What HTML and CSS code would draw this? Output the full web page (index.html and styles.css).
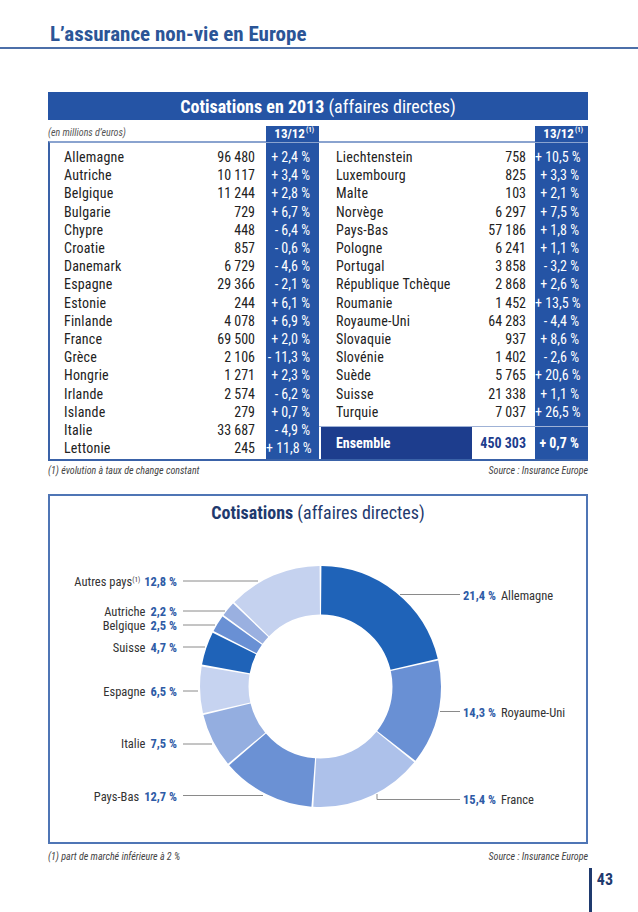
FILE: index.html
```html
<!DOCTYPE html>
<html lang="fr">
<head>
<meta charset="utf-8">
<title>L’assurance non-vie en Europe</title>
<link rel="stylesheet" href="styles.css">
</head>
<body>
<header class="page-head">
  <h1 class="page-title">L’assurance non-vie en Europe</h1>
</header>
<main class="content">
  <section class="cotis">
    <div class="cotis-title"><strong>Cotisations en 2013</strong> (affaires directes)</div>
    <div class="cotis-sub">
      <span class="unit">(en millions d’euros)</span>
      <span class="sub-badge">13/12<sup>(1)</sup></span>
      <span></span>
      <span class="sub-badge">13/12<sup>(1)</sup></span>
    </div>
    <div class="cotis-body">
      <div class="rows rows-left">
        <span>Allemagne</span><span>96 480</span>
        <span>Autriche</span><span>10 117</span>
        <span>Belgique</span><span>11 244</span>
        <span>Bulgarie</span><span>729</span>
        <span>Chypre</span><span>448</span>
        <span>Croatie</span><span>857</span>
        <span>Danemark</span><span>6 729</span>
        <span>Espagne</span><span>29 366</span>
        <span>Estonie</span><span>244</span>
        <span>Finlande</span><span>4 078</span>
        <span>France</span><span>69 500</span>
        <span>Grèce</span><span>2 106</span>
        <span>Hongrie</span><span>1 271</span>
        <span>Irlande</span><span>2 574</span>
        <span>Islande</span><span>279</span>
        <span>Italie</span><span>33 687</span>
        <span>Lettonie</span><span>245</span>
      </div>
      <ul class="pcts pcts-left">
        <li>+ 2,4 %</li><li>+ 3,4 %</li><li>+ 2,8 %</li><li>+ 6,7 %</li>
        <li>- 6,4 %</li><li>- 0,6 %</li><li>- 4,6 %</li><li>- 2,1 %</li>
        <li>+ 6,1 %</li><li>+ 6,9 %</li><li>+ 2,0 %</li><li>- 11,3 %</li>
        <li>+ 2,3 %</li><li>- 6,2 %</li><li>+ 0,7 %</li><li>- 4,9 %</li>
        <li>+ 11,8 %</li>
      </ul>
      <div class="rows rows-right">
        <span>Liechtenstein</span><span>758</span>
        <span>Luxembourg</span><span>825</span>
        <span>Malte</span><span>103</span>
        <span>Norvège</span><span>6 297</span>
        <span>Pays-Bas</span><span>57 186</span>
        <span>Pologne</span><span>6 241</span>
        <span>Portugal</span><span>3 858</span>
        <span>République Tchèque</span><span>2 868</span>
        <span>Roumanie</span><span>1 452</span>
        <span>Royaume-Uni</span><span>64 283</span>
        <span>Slovaquie</span><span>937</span>
        <span>Slovénie</span><span>1 402</span>
        <span>Suède</span><span>5 765</span>
        <span>Suisse</span><span>21 338</span>
        <span>Turquie</span><span>7 037</span>
      </div>
      <ul class="pcts pcts-right">
        <li>+ 10,5 %</li><li>+ 3,3 %</li><li>+ 2,1 %</li><li>+ 7,5 %</li>
        <li>+ 1,8 %</li><li>+ 1,1 %</li><li>- 3,2 %</li><li>+ 2,6 %</li>
        <li>+ 13,5 %</li><li>- 4,4 %</li><li>+ 8,6 %</li><li>- 2,6 %</li>
        <li>+ 20,6 %</li><li>+ 1,1 %</li><li>+ 26,5 %</li>
      </ul>
      <div class="total">
        <span class="total-label">Ensemble</span>
        <span class="total-value">450 303</span>
      </div>
      <div class="total-pct">+ 0,7 %</div>
    </div>
    <div class="notes">
      <span>(1) évolution à taux de change constant</span>
      <span>Source : Insurance Europe</span>
    </div>
  </section>

  <section class="chart">
    <div class="chart-title"><strong>Cotisations</strong> (affaires directes)</div>
    <svg class="donut" width="536" height="312" viewBox="50 530 536 312" xmlns="http://www.w3.org/2000/svg">
      <g class="ring" transform="rotate(-90 320.5 686.5)">
        <circle cx="320.5" cy="686.5" r="96.25" pathLength="100" stroke="#1f63b8" stroke-dasharray="21.15 100" stroke-dashoffset="-0.125"/>
        <circle cx="320.5" cy="686.5" r="96.25" pathLength="100" stroke="#6990d4" stroke-dasharray="14.05 100" stroke-dashoffset="-21.525"/>
        <circle cx="320.5" cy="686.5" r="96.25" pathLength="100" stroke="#adc1ea" stroke-dasharray="15.15 100" stroke-dashoffset="-35.825"/>
        <circle cx="320.5" cy="686.5" r="96.25" pathLength="100" stroke="#6b91d4" stroke-dasharray="12.45 100" stroke-dashoffset="-51.225"/>
        <circle cx="320.5" cy="686.5" r="96.25" pathLength="100" stroke="#94aee0" stroke-dasharray="7.25 100" stroke-dashoffset="-63.925"/>
        <circle cx="320.5" cy="686.5" r="96.25" pathLength="100" stroke="#c6d3f0" stroke-dasharray="6.25 100" stroke-dashoffset="-71.425"/>
        <circle cx="320.5" cy="686.5" r="96.25" pathLength="100" stroke="#1f63b8" stroke-dasharray="4.45 100" stroke-dashoffset="-77.925"/>
        <circle cx="320.5" cy="686.5" r="96.25" pathLength="100" stroke="#6990d4" stroke-dasharray="2.25 100" stroke-dashoffset="-82.625"/>
        <circle cx="320.5" cy="686.5" r="96.25" pathLength="100" stroke="#9ab0e0" stroke-dasharray="1.95 100" stroke-dashoffset="-85.125"/>
        <circle cx="320.5" cy="686.5" r="96.25" pathLength="100" stroke="#c5d2ef" stroke-dasharray="12.55 100" stroke-dashoffset="-87.325"/>
      </g>
      <g class="leaders">
        <line x1="183" y1="581" x2="258" y2="581"/>
        <line x1="183" y1="611" x2="225" y2="611"/>
        <line x1="183" y1="625" x2="215" y2="625"/>
        <line x1="183" y1="647" x2="205" y2="647"/>
        <line x1="183" y1="691" x2="198" y2="691"/>
        <line x1="183" y1="744" x2="212" y2="744"/>
        <line x1="183" y1="795.5" x2="263" y2="795.5"/>
        <line x1="400" y1="594.5" x2="460" y2="594.5"/>
        <line x1="440" y1="711.5" x2="460" y2="711.5"/>
        <polyline points="377,794 377,799.5 460,799.5"/>
      </g>
      <g class="labels">
        <text x="177" y="585.5" text-anchor="end">Autres pays<tspan class="sup" dy="-4">(1)</tspan><tspan class="pct" dx="4" dy="4">12,8 %</tspan></text>
        <text x="177" y="615.5" text-anchor="end">Autriche<tspan class="pct" dx="5">2,2 %</tspan></text>
        <text x="177" y="629.5" text-anchor="end">Belgique<tspan class="pct" dx="5">2,5 %</tspan></text>
        <text x="177" y="651.5" text-anchor="end">Suisse<tspan class="pct" dx="5">4,7 %</tspan></text>
        <text x="177" y="695.5" text-anchor="end">Espagne<tspan class="pct" dx="5">6,5 %</tspan></text>
        <text x="177" y="748" text-anchor="end">Italie<tspan class="pct" dx="5">7,5 %</tspan></text>
        <text x="177" y="800.5" text-anchor="end">Pays-Bas<tspan class="pct" dx="5">12,7 %</tspan></text>
        <text x="463" y="599.5"><tspan class="pct">21,4 %</tspan><tspan dx="5">Allemagne</tspan></text>
        <text x="463" y="716.5"><tspan class="pct">14,3 %</tspan><tspan dx="5">Royaume-Uni</tspan></text>
        <text x="463" y="803.5"><tspan class="pct">15,4 %</tspan><tspan dx="5">France</tspan></text>
      </g>
    </svg>
  </section>
  <div class="notes chart-notes">
    <span>(1) part de marché inférieure à 2 %</span>
    <span>Source : Insurance Europe</span>
  </div>
</main>
<footer class="folio"><span class="folio-num">43</span></footer>
</body>
</html>
```

FILE: styles.css
```css
* { box-sizing: border-box; }

html, body {
  margin: 0;
  padding: 0;
  background: #ffffff;
}

body {
  width: 638px;
  font-family: "Liberation Sans Narrow", "Roboto Condensed", "Arial Narrow", "Roboto", sans-serif;
  color: #222222;
}

.page-head {
  height: 49px;
  border-bottom: 2px solid #4c6fa9;
  padding: 24px 0 0 50px;
}

.page-title {
  margin: 0;
  font-size: 21px;
  line-height: 20px;
  font-weight: 700;
  color: #2b5597;
}

.content {
  width: 540px;
  margin: 0 0 0 48px;
}

.cotis {
  margin-top: 43px;
}

.cotis-title {
  height: 28px;
  background: #2554a5;
  color: #ffffff;
  text-align: center;
  font-size: 18px;
  line-height: 29px;
}

.cotis-title strong { font-weight: 700; }

.cotis-sub {
  display: grid;
  grid-template-columns: 218px 53px 216px 53px;
  margin-top: 6px;
  height: 15px;
  align-items: stretch;
}

.unit {
  font-size: 10px;
  font-style: italic;
  color: #555555;
  line-height: 14px;
}

.sub-badge {
  background: #2554a5;
  color: #ffffff;
  font-weight: 700;
  font-size: 13px;
  line-height: 16px;
  text-align: right;
  padding-right: 5px;
}

.sub-badge sup {
  font-size: 7px;
  vertical-align: 6px;
  line-height: 0;
  margin-left: 1px;
}

.cotis-body {
  display: grid;
  grid-template-columns: 216px 53px 216px 53px;
  grid-template-rows: 1fr 33px;
  height: 320px;
  border-left: 2px solid #3a62a8;
  border-top: 2px solid #8aa3cf;
  border-bottom: 2px solid #3a62a8;
  font-size: 14px;
  line-height: 18.2px;
}

.rows {
  display: grid;
  grid-template-columns: 1fr auto;
  align-content: start;
  padding-top: 5px;
  white-space: nowrap;
  letter-spacing: 0.2px;
}

.rows span:nth-child(even) { text-align: right; letter-spacing: 0; }

.rows-left {
  grid-column: 1;
  grid-row: 1 / 3;
  padding-left: 14px;
  padding-right: 11px;
}

.rows-right {
  grid-column: 3;
  grid-row: 1;
  padding-left: 17px;
  padding-right: 9px;
}

.pcts {
  list-style: none;
  margin: 0;
  padding: 5px 9px 0 0;
  background: #2554a5;
  color: #ffffff;
  text-align: right;
  white-space: nowrap;
}

.pcts-left { grid-column: 2; grid-row: 1 / 3; }
.pcts-right { grid-column: 4; grid-row: 1; }

.total {
  grid-column: 3;
  grid-row: 2;
  display: grid;
  grid-template-columns: 151px 1fr;
  padding-left: 2px;
  border-top: 1px solid #9fb2d6;
  font-weight: 700;
  line-height: 32px;
}

.total-label {
  background: #1d3d8d;
  color: #ffffff;
  padding-left: 15px;
}

.total-value {
  color: #1d3d8d;
  text-align: right;
  padding-right: 9px;
}

.total-pct {
  grid-column: 4;
  grid-row: 2;
  border-top: 1px solid #9fb2d6;
  background: #2554a5;
  color: #ffffff;
  font-weight: 700;
  line-height: 32px;
  text-align: right;
  padding-right: 9px;
}

.notes {
  display: flex;
  justify-content: space-between;
  margin-top: 4px;
  font-size: 10px;
  font-style: italic;
  line-height: 12px;
  color: #444444;
}

.chart {
  margin-top: 17px;
  height: 350px;
  border: 2px solid #4f75b5;
}

.chart-title {
  height: 34px;
  padding-top: 2px;
  text-align: center;
  font-size: 18px;
  line-height: 30px;
  color: #1f3a6e;
}

.chart-title strong { font-weight: 700; }

.donut {
  display: block;
}

.ring circle {
  fill: none;
  stroke-width: 48.5;
}

.leaders line,
.leaders polyline {
  fill: none;
  stroke: #8a8a8a;
  stroke-width: 1;
}

.labels text {
  font-size: 12.5px;
  fill: #333333;
}

.labels .pct {
  font-weight: 700;
  fill: #2e5ba6;
}

.labels .sup {
  font-size: 7px;
}

.chart-notes {
  margin-top: 7px;
}

.folio {
  display: flex;
  justify-content: flex-end;
  margin-top: 5px;
  padding-right: 25px;
}

.folio-num {
  border-left: 3px solid #1f3a6e;
  height: 50px;
  padding-left: 5px;
  font-size: 16px;
  font-weight: 700;
  line-height: 24px;
  color: #1f3a6e;
}
```
